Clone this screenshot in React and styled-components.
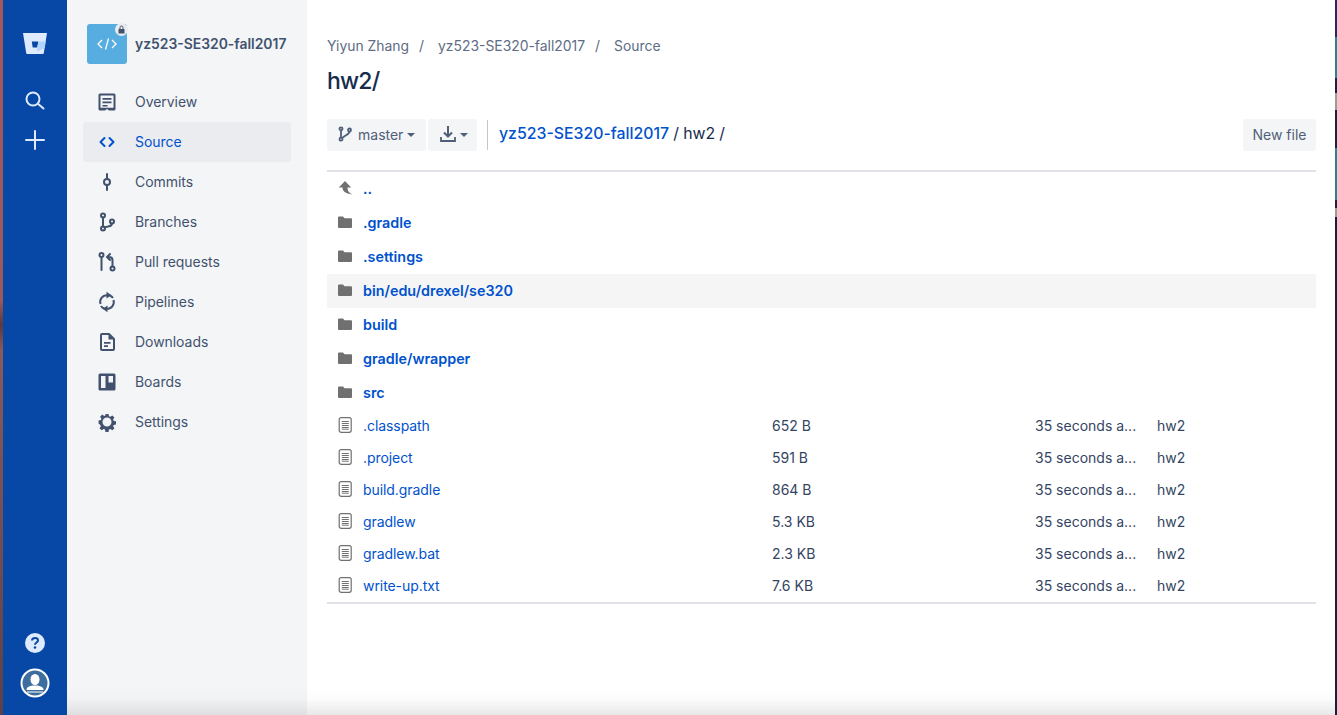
import React from "react";
import styled, { createGlobalStyle } from "styled-components";

const Global = createGlobalStyle`
  html, body { margin: 0; padding: 0; height: 100%; background: #fff; overflow: hidden; }
  body { font-family: Inter, "Liberation Sans", sans-serif; font-size: 14px; color: #172b4d; }
  a { text-decoration: none; }
`;

const Page = styled.div`
  position: relative;
  display: flex;
  width: 1337px;
  height: 715px;
  overflow: hidden;
`;
const WindowEdge = styled.div`
  width: ${p => p.$w}px;
  flex: none;
  background: ${p => p.$bg};
`;
const GlobalNav = styled.nav`
  width: 64px;
  flex: none;
  background: #0747a6;
  display: flex;
  flex-direction: column;
  align-items: center;
  padding: 31px 0 17px;
  box-sizing: border-box;
`;
const NavBtn = styled.div`
  display: flex;
  align-items: center;
  justify-content: center;
  margin-top: ${p => p.$mt || 0}px;
  color: #deebff;
`;
const Spacer = styled.div`
  flex: 1;
`;
const Sidebar = styled.aside`
  width: 240px;
  flex: none;
  background: #f4f5f7;
  padding: 24px 16px 0;
  box-sizing: border-box;
`;
const RepoHead = styled.div`
  display: flex;
  align-items: center;
  gap: 8px;
  height: 40px;
  margin: 0 0 18px 4px;
`;
const RepoAvatar = styled.div`
  position: relative;
  width: 40px;
  height: 40px;
  border-radius: 3px;
  background: #57ade0;
  display: flex;
  align-items: center;
  justify-content: center;
`;
const LockBadge = styled.div`
  position: absolute;
  top: -1px;
  right: -1px;
  width: 13px;
  height: 13px;
  border-radius: 50%;
  background: #ebecf0;
  display: flex;
  align-items: center;
  justify-content: center;
`;
const RepoName = styled.div`
  font-weight: 600;
  font-size: 13.9px;
  color: #42526e;
  white-space: nowrap;
`;
const SideItem = styled.div`
  display: flex;
  align-items: center;
  height: 40px;
  width: 208px;
  box-sizing: border-box;
  border-radius: 3px;
  color: ${p => (p.$active ? "#0052cc" : "#42526e")};
  background: ${p => (p.$active ? "#ebecf0" : "transparent")};
  font-size: 14px;
  letter-spacing: -0.05px;
`;
const SideIcon = styled.span`
  width: 48px;
  display: flex;
  align-items: center;
  justify-content: center;
  flex: none;
`;
const SideLabel = styled.span`
  margin-left: 4px;
  position: relative;
  top: -1px;
`;
const Main = styled.main`
  flex: 1;
  min-width: 0;
  background: #fff;
  padding: 38px 19px 0 20px;
`;
const Crumbs = styled.div`
  display: flex;
  color: #5e6c84;
  font-size: 13.9px;
  line-height: 16px;
  height: 16px;
  white-space: nowrap;
`;
const CrumbSep = styled.span`
  margin: 0 14px 0 10px;
`;
const Title = styled.h1`
  margin: 11px 0 0;
  font-size: 23px;
  line-height: 32px;
  font-weight: 500;
  color: #172b4d;
  letter-spacing: -0.8px;
`;
const Toolbar = styled.div`
  display: flex;
  align-items: center;
  height: 32px;
  margin-top: 22px;
  gap: 2px;
`;
const ToolBtn = styled.div`
  display: flex;
  align-items: center;
  height: 32px;
  width: ${p => p.$w}px;
  box-sizing: border-box;
  padding: 0 0 2px 10px;
  background: #f4f5f7;
  border-radius: 3px;
  color: #505f79;
  font-size: 14px;
`;
const BranchGlyph = styled.svg`
  margin-right: 5px;
  flex: none;
`;
const Caret = styled.span`
  width: 0;
  height: 0;
  margin-left: ${p => p.$ml || 4}px;
  border-left: 4px solid transparent;
  border-right: 4px solid transparent;
  border-top: 4px solid #505f79;
  transform: translateY(1px);
`;
const Divider = styled.div`
  width: 1px;
  height: 30px;
  background: #c1c7d0;
  margin: 0 9px 0 8px;
`;
const RepoPath = styled.div`
  font-size: 15.85px;
  line-height: 30px;
  height: 32px;
  font-weight: 400;
  color: #172b4d;
  white-space: nowrap;
  flex: 1;
  word-spacing: -0.3px;
`;
const RepoLink = styled.a`
  color: #0052cc;
  font-weight: 500;
`;
const NewFile = styled.div`
  width: 73px;
  height: 32px;
  box-sizing: border-box;
  padding-bottom: 2px;
  background: #f4f5f7;
  border-radius: 3px;
  display: flex;
  align-items: center;
  justify-content: center;
  color: #505f79;
  font-size: 14px;
`;
const Listing = styled.div`
  margin-top: 19px;
  border-top: 2px solid #dfe1e6;
  border-bottom: 2px solid #dfe1e6;
`;
const DirRow = styled.div`
  display: flex;
  align-items: center;
  height: 34px;
  box-sizing: border-box;
  padding-bottom: 2px;
  background: ${p => (p.$hover ? "#f5f5f5" : "transparent")};
`;
const FileRow = styled.div`
  display: grid;
  grid-template-columns: 445px 263px 122px 1fr;
  align-items: center;
  height: 32px;
  box-sizing: border-box;
  padding-bottom: 2px;
  color: #344563;
  font-size: 14px;
`;
const NameCell = styled.div`
  display: flex;
  align-items: center;
`;
const RowIcon = styled.span`
  width: 36px;
  flex: none;
  display: flex;
  align-items: center;
  justify-content: center;
  box-sizing: border-box;
`;
const DirLink = styled.a`
  color: #0052cc;
  font-weight: 600;
  font-size: 14.35px;
`;
const FileLink = styled.a`
  color: #0052cc;
  font-size: 14px;
  letter-spacing: -0.07px;
`;

const ico = "#42526e";
const Svg = ({ s = 24, c = ico, children }) => (
  <svg width={s} height={s} viewBox="0 0 24 24" fill="none" stroke={c} strokeWidth="2" strokeLinecap="round" strokeLinejoin="round">
    {children}
  </svg>
);

const icons = {
  overview: (
    <svg width="24" height="24" viewBox="0 0 24 24">
      <path fill={ico} fillRule="evenodd" d="M5 3.500h14A1.500 1.500 0 0 1 20.500 5v14a1.500 1.500 0 0 1-1.500 1.500h-5l-2-1.600-2 1.600H5A1.500 1.500 0 0 1 3.500 19V5A1.500 1.500 0 0 1 5 3.500zM5.500 5.500v12.300h13V5.500z" />
      <path fill={ico} d="M7.500 8h9v1.800h-9zM7.500 11.500h9v1.800h-9zM7.500 15h5v1.600h-5z" />
    </svg>
  ),
  source: (
    <Svg c="#0052cc" s={24}>
      <path d="M9.500 8l-4 4 4 4M14.500 8l4 4-4 4" />
    </Svg>
  ),
  commits: (
    <Svg>
      <circle cx="12" cy="12" r="3" />
      <path d="M12 4v5M12 15v5" />
    </Svg>
  ),
  branches: (
    <Svg>
      <circle cx="8" cy="5.500" r="2" />
      <circle cx="8" cy="18.500" r="2" />
      <circle cx="17" cy="11.500" r="2" />
      <path d="M8 7.500v9M17 13.500c0 2.500-3 3-7.500 3.800" />
    </Svg>
  ),
  pulls: (
    <Svg>
      <circle cx="6.500" cy="5" r="2" />
      <circle cx="17.500" cy="18.500" r="2" />
      <path d="M6.500 7v13M17.500 16.500V10c0-2-1-3-3.500-3h-1M15 4l-3 3 3 3" />
    </Svg>
  ),
  pipelines: (
    <svg width="24" height="24" viewBox="0 0 24 24" fill="none" stroke={ico} strokeWidth="2">
      <path d="M5.500 14a6.800 6.800 0 0 1 6.500-8.800M18.500 10a6.800 6.800 0 0 1-6.500 8.800" />
      <path d="M15 5.500a6.800 6.800 0 0 1 3 2.500M9 18.500a6.800 6.800 0 0 1-3-2.500" />
      <path fill={ico} stroke="none" d="M11.500 1.800l5 3.400-5 3.400zM12.500 15.400l-5 3.400 5 3.400z" />
    </svg>
  ),
  downloads: (
    <svg width="24" height="24" viewBox="0 0 24 24">
      <path fill="none" stroke={ico} strokeWidth="2" strokeLinejoin="round" d="M7 4h7l5 5v10a1 1 0 0 1-1 1H7a1 1 0 0 1-1-1V5a1 1 0 0 1 1-1z" />
      <path fill={ico} d="M13.500 4l5.500 5.500h-5.500zM9 12h6.500v1.700H9zM9 15.300h4v1.700H9z" />
    </svg>
  ),
  boards: (
    <svg width="24" height="24" viewBox="0 0 24 24">
      <path fill={ico} fillRule="evenodd" d="M5 3.500h14A1.500 1.500 0 0 1 20.500 5v14a1.500 1.500 0 0 1-1.500 1.500H5A1.500 1.500 0 0 1 3.500 19V5A1.500 1.500 0 0 1 5 3.500zM6 6v12h4.500V6zM13.500 6v6.500H18V6z" />
    </svg>
  ),
  settings: (
    <svg width="24" height="24" viewBox="0 0 24 24">
      <path fill={ico} fillRule="evenodd" transform="translate(1.200 1.200) scale(0.9)" d="M10.300 3h3.400l.5 2.600 1.500.6 2.200-1.500 2.400 2.400-1.500 2.200.6 1.500 2.600.5v3.400l-2.600.5-.6 1.500 1.500 2.200-2.400 2.400-2.200-1.500-1.500.6-.5 2.600h-3.400l-.5-2.600-1.500-.6-2.200 1.500-2.400-2.400 1.500-2.200-.6-1.500L2.600 13.700v-3.400l2.600-.5.6-1.500-1.500-2.200 2.400-2.400 2.200 1.500 1.500-.6zM12 7a5 5 0 1 0 0 10 5 5 0 0 0 0-10z" />
    </svg>
  ),
};

const items = [
  ["Overview", "overview"],
  ["Source", "source", true],
  ["Commits", "commits"],
  ["Branches", "branches"],
  ["Pull requests", "pulls"],
  ["Pipelines", "pipelines"],
  ["Downloads", "downloads"],
  ["Boards", "boards"],
  ["Settings", "settings"],
];

const FolderIcon = () => (
  <svg width="16" height="16" viewBox="0 0 16 16">
    <path fill="#707070" d="M1 3.500A1 1 0 0 1 2 2.500h4l1.500 1.800H14a1 1 0 0 1 1 1V13a1 1 0 0 1-1 1H2a1 1 0 0 1-1-1z" />
  </svg>
);
const FileIcon = () => (
  <svg width="16" height="18" viewBox="0 0 16 18" fill="none">
    <rect x="2.200" y="1.700" width="12" height="14.600" rx="2" stroke="#707070" strokeWidth="1.200" />
    <path d="M4.800 5.500h7M4.800 7.500h7M4.800 9.500h7M4.800 11.500h7M4.800 13.200h7" stroke="#707070" strokeWidth="1" />
  </svg>
);
const UpIcon = () => (
  <svg width="16" height="16" viewBox="0 0 16 16">
    <path fill="#707070" d="M8 1L1.800 7.500h3.700C5.500 11 8 13.500 15.500 14.500 11.500 12.500 10.500 10.500 10.500 7.500h3.700z" />
  </svg>
);

const dirs = [".gradle", ".settings", "bin/edu/drexel/se320", "build", "gradle/wrapper", "src"];
const files = [
  [".classpath", "652 B"],
  [".project", "591 B"],
  ["build.gradle", "864 B"],
  ["gradlew", "5.3 KB"],
  ["gradlew.bat", "2.3 KB"],
  ["write-up.txt", "7.6 KB"],
];

const BottomShade = styled.div`
  position: absolute;
  left: 67px;
  right: 2px;
  bottom: 0;
  height: 30px;
  pointer-events: none;
  background: linear-gradient(to bottom, rgba(0,0,0,0), rgba(0,0,0,0.012) 45%, rgba(0,0,0,0.09));
`;

const leftEdge = "linear-gradient(to bottom, #a5585a 0, #9a5a5a 300px, #5a3a40 325px, #8a5a58 350px, #6a4a50 600px, #5c4048 100%)";
const rightEdge = "linear-gradient(to bottom, #2a2560 0 37px, #2f7f95 37px 78px, #1c2040 78px 93px, #9a9a9a 93px 110px, #1c2040 110px 148px, #2f7f95 148px 200px, #1c2040 200px 208px, #9a9a9a 208px 217px, #1c1c40 217px)";

export default function App() {
  return (
    <Page>
      <Global />
      <WindowEdge $w={3} $bg={leftEdge} />
      <GlobalNav>
        <NavBtn>
          <svg width="24" height="24" viewBox="0 0 24 24">
            <path fill="#deebff" fillRule="evenodd" d="M0 2h24l-3.200 20c-.1.500-.5 1-1 1H4.200c-.5 0-.9-.5-1-1zM8.800 10.500l.9 6h4.600l1-6z" />
            <path fill="#b3d4ff" d="M15.300 10.500h7.400l-1 6.500-7.400 3.500-.1-4 .1 0z" />
          </svg>
        </NavBtn>
        <NavBtn $mt={33}>
          <svg width="24" height="24" viewBox="0 0 24 24" fill="none" stroke="#deebff" strokeWidth="2" strokeLinecap="round">
            <circle cx="10" cy="11" r="6.500" />
            <path d="M15.200 16l5.300 4.500" />
          </svg>
        </NavBtn>
        <NavBtn $mt={16}>
          <svg width="24" height="24" viewBox="0 0 24 24" fill="none" stroke="#deebff" strokeWidth="2" strokeLinecap="round">
            <path d="M12 3v18M3 12h18" />
          </svg>
        </NavBtn>
        <Spacer />
        <NavBtn>
          <svg width="20" height="20" viewBox="0 0 20 20">
            <circle cx="10" cy="10" r="10" fill="#deebff" />
            <path d="M7 7.500C7 5.800 8.300 5 10 5s3 .9 3 2.400c0 2.200-3 2.100-3 4.300" fill="none" stroke="#0747a6" strokeWidth="2" />
            <circle cx="10" cy="14.500" r="1.300" fill="#0747a6" />
          </svg>
        </NavBtn>
        <NavBtn $mt={15}>
          <svg width="30" height="30" viewBox="0 0 30 30">
            <circle cx="15" cy="15" r="13.500" fill="#3e6e9e" stroke="#fff" strokeWidth="2" />
            <ellipse cx="15" cy="11.500" rx="4.500" ry="5.500" fill="#fff" />
            <path d="M6.500 22c0-3 3-4.500 8.500-4.500S23.500 19 23.500 22z" fill="#fff" />
            <path d="M7 24h16" stroke="#fff" strokeWidth="1" />
          </svg>
        </NavBtn>
      </GlobalNav>
      <Sidebar>
        <RepoHead>
          <RepoAvatar>
            <svg width="24" height="24" viewBox="0 0 24 24" fill="none" stroke="#fff" strokeWidth="1.300">
              <path d="M7 8l-4 4 4 4M17 8l4 4-4 4M13.500 6.500l-3 11" />
            </svg>
            <LockBadge>
              <svg width="9" height="9" viewBox="0 0 9 9">
                <path fill="#42526e" d="M1.500 4h6v4.500h-6z" />
                <path d="M3 4V2.500a1.500 1.500 0 0 1 3 0V4" fill="none" stroke="#42526e" />
              </svg>
            </LockBadge>
          </RepoAvatar>
          <RepoName>yz523-SE320-fall2017</RepoName>
        </RepoHead>
        {items.map(([label, k, active]) => (
          <SideItem key={label} $active={active}>
            <SideIcon>{icons[k]}</SideIcon>
            <SideLabel>{label}</SideLabel>
          </SideItem>
        ))}
      </Sidebar>
      <Main>
        <Crumbs>
          <span>Yiyun Zhang</span>
          <CrumbSep>/</CrumbSep>
          <span>yz523-SE320-fall2017</span>
          <CrumbSep>/</CrumbSep>
          <span>Source</span>
        </Crumbs>
        <Title>hw2/</Title>
        <Toolbar>
          <ToolBtn $w={99}>
            <BranchGlyph width="16" height="16" viewBox="0 0 16 16" fill="none" stroke="#505f79" strokeWidth="1.800">
              <circle cx="4" cy="2.800" r="1.500" />
              <circle cx="4" cy="13.200" r="1.500" />
              <circle cx="12.500" cy="4" r="1.500" />
              <path d="M4 4.300v7.400M12.500 5.500c0 3-4.500 3.500-7.300 6.500" />
            </BranchGlyph>
            master
            <Caret />
          </ToolBtn>
          <ToolBtn $w={49}>
            <svg width="20" height="20" viewBox="0 0 20 20" fill="none" stroke="#505f79" strokeWidth="2">
              <path d="M10 2v10M6 8.500l4 4 4-4" />
              <path d="M3 13v4h14v-4" strokeWidth="1.800" />
            </svg>
            <Caret $ml={2} />
          </ToolBtn>
          <Divider />
          <RepoPath>
            <RepoLink>yz523-SE320-fall2017</RepoLink> / hw2 /
          </RepoPath>
          <NewFile>New file</NewFile>
        </Toolbar>
        <Listing>
          <DirRow>
            <RowIcon><UpIcon /></RowIcon>
            <DirLink>..</DirLink>
          </DirRow>
          {dirs.map(d => (
            <DirRow key={d} $hover={d.startsWith("bin")}>
              <RowIcon><FolderIcon /></RowIcon>
              <DirLink>{d}</DirLink>
            </DirRow>
          ))}
          {files.map(([n, s]) => (
            <FileRow key={n}>
              <NameCell>
                <RowIcon><FileIcon /></RowIcon>
                <FileLink>{n}</FileLink>
              </NameCell>
              <span>{s}</span>
              <span>35 seconds a...</span>
              <span>hw2</span>
            </FileRow>
          ))}
        </Listing>
      </Main>
      <WindowEdge $w={2} $bg={rightEdge} />
      <BottomShade />
    </Page>
  );
}
